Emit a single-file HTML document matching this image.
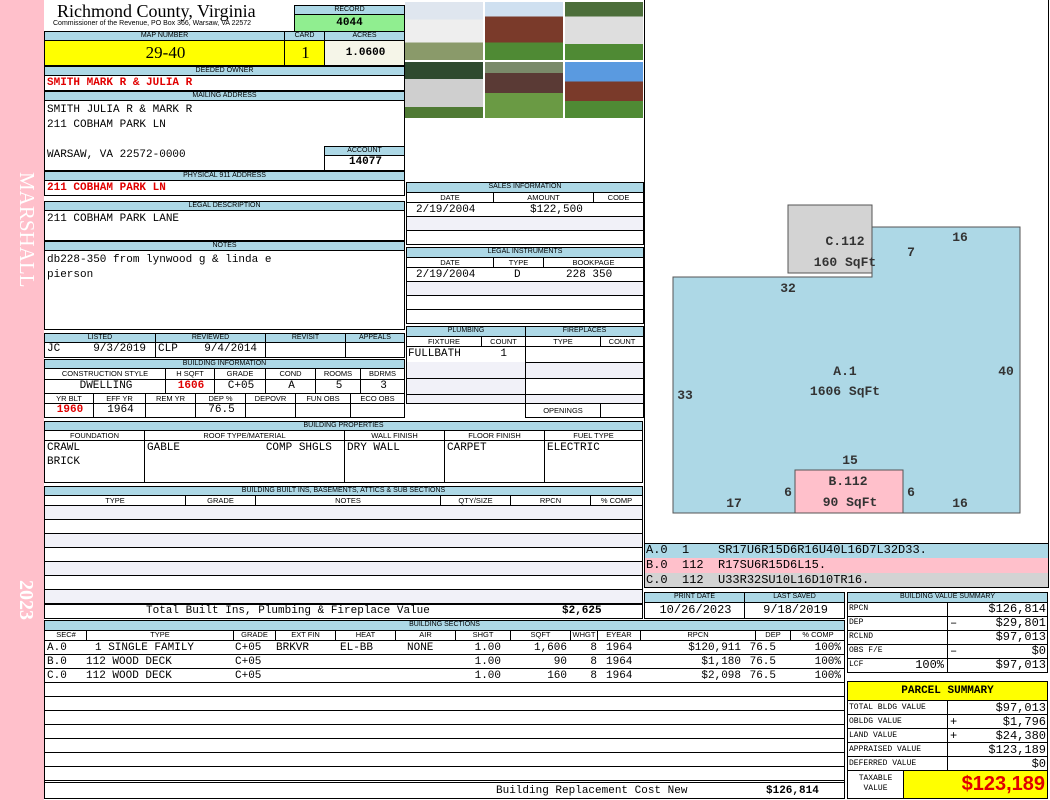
<!DOCTYPE html>
<html><head><meta charset="utf-8"><style>
*{margin:0;padding:0;box-sizing:border-box}
body{width:1050px;height:800px;background:#fff;position:relative;overflow:hidden;font-family:"Liberation Mono",monospace;font-size:11px;color:#000}
.a{position:absolute;box-sizing:border-box}
.h{position:absolute;background:#add8e6;border:1px solid #000;font:7px "Liberation Sans",sans-serif;text-align:center;line-height:8px;white-space:nowrap;overflow:hidden}
.s{position:absolute;background:#fff;border:1px solid #000;font:7.5px "Liberation Sans",sans-serif;text-align:center;line-height:9px;white-space:nowrap;overflow:hidden}
.c{position:absolute;border:1px solid #000;font:11px "Liberation Mono",monospace;line-height:13px;white-space:pre;overflow:hidden;padding-left:2px}
.r{color:#e00000;font-weight:bold}
.row span{position:absolute;white-space:pre}
.row .R{text-align:right}
</style></head><body>
<div class="a" style="left:0;top:0;width:44px;height:800px;background:#ffc0cb"></div>
<div class="a" style="left:14px;top:172px;color:#fff;font:21px 'Liberation Serif',serif;writing-mode:vertical-rl">MARSHALL</div>
<div class="a" style="left:14px;top:580px;color:#fff;font:bold 20px 'Liberation Serif',serif;writing-mode:vertical-rl">2023</div>

<div class="a" style="left:57px;top:1px;font:18px 'Liberation Serif',serif;line-height:20px">Richmond County, Virginia</div>
<div class="a" style="left:53px;top:20px;font:7px 'Liberation Sans',sans-serif;white-space:nowrap">Commissioner of the Revenue, PO Box 366, Warsaw, VA 22572</div>
<div class="h" style="left:294px;top:5px;width:111px;height:10px">RECORD</div>
<div class="c" style="left:294px;top:14px;width:111px;height:18px;background:#90ee90;text-align:center;font-weight:bold;line-height:16px;padding:0">4044</div>

<div class="h" style="left:44px;top:31px;width:241px;height:10px">MAP NUMBER</div>
<div class="h" style="left:284px;top:31px;width:41px;height:10px">CARD</div>
<div class="h" style="left:324px;top:31px;width:81px;height:10px">ACRES</div>
<div class="c" style="left:44px;top:40px;width:241px;height:26px;background:#ffff00;text-align:center;font:17px/24px 'Liberation Serif',serif">29-40</div>
<div class="c" style="left:284px;top:40px;width:41px;height:26px;background:#ffff00;text-align:center;font:17px/24px 'Liberation Serif',serif">1</div>
<div class="c" style="left:324px;top:40px;width:81px;height:26px;background:#f5f5e8;text-align:center;font-weight:bold;line-height:24px">1.0600</div>

<div class="h" style="left:44px;top:66px;width:361px;height:10px">DEEDED OWNER</div>
<div class="c r" style="left:44px;top:75px;width:361px;height:16px;line-height:15px">SMITH MARK R &amp; JULIA R</div>
<div class="h" style="left:44px;top:91px;width:361px;height:10px">MAILING ADDRESS</div>
<div class="c" style="left:44px;top:100px;width:361px;height:71px;line-height:15px;padding-top:2px">SMITH JULIA R &amp; MARK R
211 COBHAM PARK LN

WARSAW, VA 22572-0000</div>
<div class="h" style="left:324px;top:146px;width:81px;height:10px">ACCOUNT</div>
<div class="c" style="left:324px;top:155px;width:81px;height:16px;text-align:center;font-weight:bold;background:#fff">14077</div>
<div class="h" style="left:44px;top:171px;width:361px;height:10px">PHYSICAL 911 ADDRESS</div>
<div class="c r" style="left:44px;top:180px;width:361px;height:16px;line-height:15px">211 COBHAM PARK LN</div>

<div class="h" style="left:44px;top:201px;width:361px;height:10px">LEGAL DESCRIPTION</div>
<div class="c" style="left:44px;top:210px;width:361px;height:31px;padding-top:2px">211 COBHAM PARK LANE</div>
<div class="h" style="left:44px;top:241px;width:361px;height:10px">NOTES</div>
<div class="c" style="left:44px;top:250px;width:361px;height:80px;line-height:15px;padding-top:2px">db228-350 from lynwood g &amp; linda e
pierson</div>

<div class="h" style="left:44px;top:333px;width:112px;height:10px">LISTED</div>
<div class="h" style="left:155px;top:333px;width:111px;height:10px">REVIEWED</div>
<div class="h" style="left:265px;top:333px;width:81px;height:10px">REVISIT</div>
<div class="h" style="left:345px;top:333px;width:60px;height:10px">APPEALS</div>
<div class="c" style="left:44px;top:342px;width:112px;height:16px">JC     9/3/2019</div>
<div class="c" style="left:155px;top:342px;width:111px;height:16px">CLP    9/4/2014</div>
<div class="c" style="left:265px;top:342px;width:81px;height:16px"></div>
<div class="c" style="left:345px;top:342px;width:60px;height:16px"></div>

<div class="h" style="left:44px;top:359px;width:361px;height:10px">BUILDING INFORMATION</div>
<div class="s" style="left:44px;top:368px;width:122px;height:12px">CONSTRUCTION STYLE</div>
<div class="s" style="left:165px;top:368px;width:50px;height:12px">H SQFT</div>
<div class="s" style="left:214px;top:368px;width:52px;height:12px">GRADE</div>
<div class="s" style="left:265px;top:368px;width:51px;height:12px">COND</div>
<div class="s" style="left:315px;top:368px;width:46px;height:12px">ROOMS</div>
<div class="s" style="left:360px;top:368px;width:45px;height:12px">BDRMS</div>
<div class="c" style="left:44px;top:379px;width:122px;height:15px;text-align:center">DWELLING</div>
<div class="c r" style="left:165px;top:379px;width:50px;height:15px;text-align:center">1606</div>
<div class="c" style="left:214px;top:379px;width:52px;height:15px;text-align:center">C+05</div>
<div class="c" style="left:265px;top:379px;width:51px;height:15px;text-align:center">A</div>
<div class="c" style="left:315px;top:379px;width:46px;height:15px;text-align:center">5</div>
<div class="c" style="left:360px;top:379px;width:45px;height:15px;text-align:center">3</div>
<div class="s" style="left:44px;top:393px;width:50px;height:11px">YR BLT</div>
<div class="s" style="left:93px;top:393px;width:53px;height:11px">EFF YR</div>
<div class="s" style="left:145px;top:393px;width:51px;height:11px">REM YR</div>
<div class="s" style="left:195px;top:393px;width:51px;height:11px">DEP %</div>
<div class="s" style="left:245px;top:393px;width:51px;height:11px">DEPOVR</div>
<div class="s" style="left:295px;top:393px;width:56px;height:11px">FUN OBS</div>
<div class="s" style="left:350px;top:393px;width:55px;height:11px">ECO OBS</div>
<div class="c r" style="left:44px;top:403px;width:50px;height:15px;text-align:center">1960</div>
<div class="c" style="left:93px;top:403px;width:53px;height:15px;text-align:center">1964</div>
<div class="c" style="left:145px;top:403px;width:51px;height:15px"></div>
<div class="c" style="left:195px;top:403px;width:51px;height:15px;text-align:center">76.5</div>
<div class="c" style="left:245px;top:403px;width:51px;height:15px"></div>
<div class="c" style="left:295px;top:403px;width:56px;height:15px"></div>
<div class="c" style="left:350px;top:403px;width:55px;height:15px"></div>

<div class="h" style="left:44px;top:421px;width:599px;height:10px">BUILDING PROPERTIES</div>
<div class="s" style="left:44px;top:430px;width:101px;height:11px">FOUNDATION</div>
<div class="s" style="left:144px;top:430px;width:201px;height:11px">ROOF TYPE/MATERIAL</div>
<div class="s" style="left:344px;top:430px;width:101px;height:11px">WALL FINISH</div>
<div class="s" style="left:444px;top:430px;width:101px;height:11px">FLOOR FINISH</div>
<div class="s" style="left:544px;top:430px;width:99px;height:11px">FUEL TYPE</div>
<div class="c" style="left:44px;top:440px;width:101px;height:43px;line-height:14px">CRAWL
BRICK</div>
<div class="c" style="left:144px;top:440px;width:201px;height:43px;line-height:14px">GABLE             COMP SHGLS</div>
<div class="c" style="left:344px;top:440px;width:101px;height:43px;line-height:14px">DRY WALL</div>
<div class="c" style="left:444px;top:440px;width:101px;height:43px;line-height:14px">CARPET</div>
<div class="c" style="left:544px;top:440px;width:99px;height:43px;line-height:14px">ELECTRIC</div>

<div class="h" style="left:44px;top:486px;width:599px;height:10px">BUILDING BUILT INS, BASEMENTS, ATTICS &amp; SUB SECTIONS</div>
<div class="s" style="left:44px;top:495px;width:142px;height:11px">TYPE</div>
<div class="s" style="left:185px;top:495px;width:71px;height:11px">GRADE</div>
<div class="s" style="left:255px;top:495px;width:186px;height:11px">NOTES</div>
<div class="s" style="left:440px;top:495px;width:71px;height:11px">QTY/SIZE</div>
<div class="s" style="left:510px;top:495px;width:81px;height:11px">RPCN</div>
<div class="s" style="left:590px;top:495px;width:53px;height:11px">% COMP</div>
<div class="a" style="left:44px;top:505px;width:599px;height:100px;border:1px solid #000;background:repeating-linear-gradient(#f1f1f8 0 13px,#000 13px 14px,#fff 14px 27px,#000 27px 28px)"></div>
<div class="c" style="left:44px;top:604px;width:599px;height:15px"></div>
<div class="a" style="left:146px;top:605px;white-space:pre;line-height:13px">Total Built Ins, Plumbing &amp; Fireplace Value</div>
<div class="a" style="left:562px;top:605px;font-weight:bold;line-height:13px">$2,625</div>

<div class="h" style="left:44px;top:620px;width:801px;height:11px">BUILDING SECTIONS</div>
<div class="a" style="left:44px;top:630px;width:801px;height:11px;border:1px solid #000;background:#fff"></div>
<div class="a" style="left:44px;top:630px;width:801px;height:11px;font:7.5px/9px 'Liberation Sans',sans-serif;white-space:nowrap">
<span class="a" style="left:2px;width:40px;text-align:center">SEC#</span>
<span class="a" style="left:42px;width:147px;text-align:center;border-left:1px solid #000;height:10px">TYPE</span>
<span class="a" style="left:189px;width:42px;text-align:center;border-left:1px solid #000;height:10px">GRADE</span>
<span class="a" style="left:231px;width:60px;text-align:center;border-left:1px solid #000;height:10px">EXT FIN</span>
<span class="a" style="left:291px;width:60px;text-align:center;border-left:1px solid #000;height:10px">HEAT</span>
<span class="a" style="left:351px;width:60px;text-align:center;border-left:1px solid #000;height:10px">AIR</span>
<span class="a" style="left:411px;width:55px;text-align:center;border-left:1px solid #000;height:10px">SHGT</span>
<span class="a" style="left:466px;width:60px;text-align:center;border-left:1px solid #000;height:10px">SQFT</span>
<span class="a" style="left:526px;width:27px;text-align:center;border-left:1px solid #000;height:10px">WHGT</span>
<span class="a" style="left:553px;width:43px;text-align:center;border-left:1px solid #000;height:10px">EYEAR</span>
<span class="a" style="left:596px;width:115px;text-align:center;border-left:1px solid #000;height:10px">RPCN</span>
<span class="a" style="left:711px;width:35px;text-align:center;border-left:1px solid #000;height:10px">DEP</span>
<span class="a" style="left:746px;width:55px;text-align:center;border-left:1px solid #000;height:10px">% COMP</span>
</div>
<div class="a" style="left:44px;top:640px;width:801px;height:143px;border:1px solid #000;background:repeating-linear-gradient(#fff 0 13px,#000 13px 14px)"></div>
<div class="a row" style="left:0;top:641px;width:1050px;height:14px;line-height:14px">
<span style="left:47px">A.0</span><span style="left:95px">1 SINGLE FAMILY</span><span style="left:235px">C+05</span><span style="left:276px">BRKVR</span><span style="left:340px">EL-BB</span><span style="left:407px">NONE</span>
<span class="R" style="left:451px;width:50px">1.00</span><span class="R" style="left:507px;width:60px">1,606</span><span class="R" style="left:577px;width:20px">8</span><span style="left:606px">1964</span><span class="R" style="left:671px;width:70px">$120,911</span><span class="R" style="left:736px;width:40px">76.5</span><span class="R" style="left:800px;width:41px">100%</span></div>
<div class="a row" style="left:0;top:655px;width:1050px;height:14px;line-height:14px">
<span style="left:47px">B.0</span><span style="left:86px">112 WOOD DECK</span><span style="left:235px">C+05</span>
<span class="R" style="left:451px;width:50px">1.00</span><span class="R" style="left:507px;width:60px">90</span><span class="R" style="left:577px;width:20px">8</span><span style="left:606px">1964</span><span class="R" style="left:671px;width:70px">$1,180</span><span class="R" style="left:736px;width:40px">76.5</span><span class="R" style="left:800px;width:41px">100%</span></div>
<div class="a row" style="left:0;top:669px;width:1050px;height:14px;line-height:14px">
<span style="left:47px">C.0</span><span style="left:86px">112 WOOD DECK</span><span style="left:235px">C+05</span>
<span class="R" style="left:451px;width:50px">1.00</span><span class="R" style="left:507px;width:60px">160</span><span class="R" style="left:577px;width:20px">8</span><span style="left:606px">1964</span><span class="R" style="left:671px;width:70px">$2,098</span><span class="R" style="left:736px;width:40px">76.5</span><span class="R" style="left:800px;width:41px">100%</span></div>
<div class="c" style="left:44px;top:782px;width:801px;height:17px"></div>
<div class="a" style="left:496px;top:784px;white-space:pre;line-height:14px">Building Replacement Cost New</div>
<div class="a" style="left:766px;top:784px;font-weight:bold;line-height:14px">$126,814</div>

<div class="a" style="left:405px;top:0;width:240px;height:181px;border-right:1px solid #000"></div>
<div class="a" style="left:405px;top:2px;width:78px;height:58px;background:linear-gradient(#dfe6ef 0 30%,#eee 30% 70%,#8a9a6a 70%)"></div>
<div class="a" style="left:485px;top:2px;width:78px;height:58px;background:linear-gradient(#cfe0f0 0 25%,#7a3a2a 25% 70%,#4f8a34 70%)"></div>
<div class="a" style="left:565px;top:2px;width:78px;height:58px;background:linear-gradient(#4c6e3a 0 25%,#dedede 25% 72%,#4f8a34 72%)"></div>
<div class="a" style="left:405px;top:62px;width:78px;height:56px;background:linear-gradient(#2f4a2f 0 30%,#cfcfcf 30% 80%,#4f7a34 80%)"></div>
<div class="a" style="left:485px;top:62px;width:78px;height:56px;background:linear-gradient(#7a8a6a 0 20%,#5a3a35 20% 55%,#6a9a44 55%)"></div>
<div class="a" style="left:565px;top:62px;width:78px;height:56px;background:linear-gradient(#5a9ae0 0 35%,#7a3a2a 35% 70%,#4f8a34 70%)"></div>

<div class="h" style="left:406px;top:182px;width:238px;height:11px">SALES INFORMATION</div>
<div class="s" style="left:406px;top:192px;width:88px;height:11px">DATE</div>
<div class="s" style="left:493px;top:192px;width:101px;height:11px">AMOUNT</div>
<div class="s" style="left:593px;top:192px;width:51px;height:11px">CODE</div>
<div class="a" style="left:406px;top:202px;width:238px;height:43px;border:1px solid #000;background:linear-gradient(#fff 0 13px,#000 13px 14px,#f1f1f8 14px 27px,#000 27px 28px,#fff 28px)"></div>
<div class="a" style="left:416px;top:204px;white-space:pre;line-height:13px">2/19/2004</div>
<div class="a" style="left:530px;top:204px;white-space:pre;line-height:13px">$122,500</div>
<div class="h" style="left:406px;top:247px;width:238px;height:11px">LEGAL INSTRUMENTS</div>
<div class="s" style="left:406px;top:257px;width:88px;height:11px">DATE</div>
<div class="s" style="left:493px;top:257px;width:51px;height:11px">TYPE</div>
<div class="s" style="left:543px;top:257px;width:101px;height:11px">BOOKPAGE</div>
<div class="a" style="left:406px;top:267px;width:238px;height:57px;border:1px solid #000;background:linear-gradient(#fff 0 13px,#000 13px 14px,#f1f1f8 14px 27px,#000 27px 28px,#fff 28px 41px,#000 41px 42px,#fff 42px)"></div>
<div class="a" style="left:416px;top:269px;white-space:pre;line-height:13px">2/19/2004</div>
<div class="a" style="left:514px;top:269px;white-space:pre;line-height:13px">D</div>
<div class="a" style="left:566px;top:269px;white-space:pre;line-height:13px">228 350</div>

<div class="h" style="left:406px;top:326px;width:120px;height:11px">PLUMBING</div>
<div class="h" style="left:525px;top:326px;width:119px;height:11px">FIREPLACES</div>
<div class="s" style="left:406px;top:336px;width:76px;height:11px">FIXTURE</div>
<div class="s" style="left:481px;top:336px;width:45px;height:11px">COUNT</div>
<div class="s" style="left:525px;top:336px;width:76px;height:11px">TYPE</div>
<div class="s" style="left:600px;top:336px;width:44px;height:11px">COUNT</div>
<div class="a" style="left:406px;top:346px;width:120px;height:58px;border:1px solid #000;background:linear-gradient(#fff 0 15px,#f1f1f8 15px 31px,#000 31px 32px,#f1f1f8 32px 47px,#000 47px 48px,#f1f1f8 48px)"></div>
<div class="a" style="left:525px;top:346px;width:119px;height:58px;border:1px solid #000;background:linear-gradient(#fff 0 15px,#000 15px 16px,#f1f1f8 16px 31px,#000 31px 32px,#fff 32px 47px,#000 47px 48px,#f1f1f8 48px)"></div>
<div class="a" style="left:408px;top:348px;white-space:pre;line-height:13px">FULLBATH      1</div>
<div class="s" style="left:525px;top:403px;width:76px;height:15px;line-height:13px">OPENINGS</div>
<div class="c" style="left:600px;top:403px;width:44px;height:15px"></div>

<div class="a" style="left:644px;top:0;width:405px;height:544px;border:1px solid #000;border-top:none"></div>
<svg class="a" style="left:0;top:0" width="1050" height="544">
<polygon points="673,277 872,277 872,227 1020,227 1020,513 903,513 903,470 795,470 795,513 673,513" fill="#add8e6" stroke="#555" stroke-width="1"/>
<rect x="788" y="205" width="84" height="68" fill="#d3d3d3" stroke="#555"/>
<rect x="795" y="470" width="108" height="43" fill="#ffc0cb" stroke="#555"/>
<g text-anchor="middle" font-family="Liberation Mono" font-weight="bold" font-size="13" fill="#333">
<text x="845" y="245">C.112</text><text x="845" y="266">160 SqFt</text>
<text x="911" y="256">7</text><text x="960" y="241">16</text><text x="788" y="292">32</text>
<text x="845" y="375">A.1</text><text x="845" y="395">1606 SqFt</text>
<text x="1006" y="375">40</text><text x="685" y="399">33</text><text x="850" y="464">15</text>
<text x="848" y="485">B.112</text><text x="850" y="506">90 SqFt</text>
<text x="788" y="496">6</text><text x="911" y="496">6</text><text x="734" y="507">17</text><text x="960" y="507">16</text>
</g></svg>
<div class="a" style="left:644px;top:543px;width:405px;height:45px;border:1px solid #000;background:linear-gradient(#add8e6 0 14px,#ffc0cb 14px 29px,#d3d3d3 29px)"></div>
<div class="a" style="left:646px;top:543px;white-space:pre;font:12px/15px 'Liberation Mono',monospace">A.0  1    SR17U6R15D6R16U40L16D7L32D33.
B.0  112  R17SU6R15D6L15.
C.0  112  U33R32SU10L16D10TR16.</div>

<div class="h" style="left:644px;top:592px;width:101px;height:11px">PRINT DATE</div>
<div class="h" style="left:744px;top:592px;width:101px;height:11px">LAST SAVED</div>
<div class="c" style="left:644px;top:602px;width:101px;height:17px;text-align:center;line-height:15px;font-size:12px">10/26/2023</div>
<div class="c" style="left:744px;top:602px;width:101px;height:17px;text-align:center;line-height:15px;font-size:12px">9/18/2019</div>

<div class="h" style="left:847px;top:592px;width:201px;height:11px">BUILDING VALUE SUMMARY</div>
<div class="a" style="left:847px;top:602px;width:201px;height:71px;border:1px solid #000;background:repeating-linear-gradient(#fff 0 13px,#000 13px 14px)"></div>
<div class="a" style="left:947px;top:602px;width:1px;height:71px;background:#000"></div>
<div class="a" style="left:849px;top:602px;font:8px/14px 'Liberation Mono',monospace;white-space:pre">RPCN
DEP
RCLND
OBS F/E
LCF</div>
<div class="a" style="left:880px;top:658px;width:64px;text-align:right;font:12px/14px 'Liberation Mono',monospace">100%</div>
<div class="a" style="left:949px;top:602px;width:97px;font:12px/14px 'Liberation Mono',monospace;white-space:pre;text-align:right">$126,814
$29,801
$97,013
$0
$97,013</div>
<div class="a" style="left:950px;top:616px;font:12px/14px 'Liberation Mono',monospace">–</div>
<div class="a" style="left:950px;top:644px;font:12px/14px 'Liberation Mono',monospace">–</div>

<div class="a" style="left:847px;top:681px;width:201px;height:20px;border:1px solid #000;background:#ffff00;text-align:center;font:bold 11px/18px 'Liberation Mono',monospace">PARCEL SUMMARY</div>
<div class="a" style="left:847px;top:700px;width:201px;height:71px;border:1px solid #000;background:repeating-linear-gradient(#fff 0 13px,#000 13px 14px)"></div>
<div class="a" style="left:947px;top:700px;width:1px;height:71px;background:#000"></div>
<div class="a" style="left:849px;top:701px;font:8px/14px 'Liberation Mono',monospace;white-space:pre">TOTAL BLDG VALUE
OBLDG VALUE
LAND VALUE
APPRAISED VALUE
DEFERRED VALUE</div>
<div class="a" style="left:949px;top:701px;width:97px;font:12px/14px 'Liberation Mono',monospace;white-space:pre;text-align:right">$97,013
$1,796
$24,380
$123,189
$0</div>
<div class="a" style="left:950px;top:715px;font:12px/14px 'Liberation Mono',monospace;white-space:pre">+
+


–</div>
<div class="a" style="left:847px;top:770px;width:57px;height:29px;border:1px solid #000;text-align:center;font:8px/10px 'Liberation Mono',monospace;padding-top:3px">TAXABLE<br>VALUE</div>
<div class="a" style="left:903px;top:770px;width:145px;height:29px;border:1px solid #000;background:#ffff00;text-align:right;padding-right:2px;color:#e00000;font:bold 20px/27px 'Liberation Sans',sans-serif">$123,189</div>
</body></html>
